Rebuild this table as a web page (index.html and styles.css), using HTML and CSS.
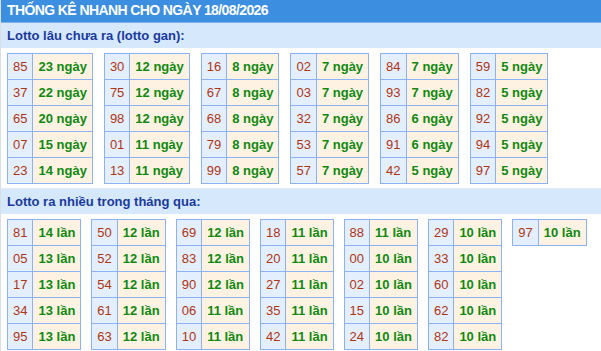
FILE: index.html
```html
<!DOCTYPE html>
<html lang="vi">
<head>
<meta charset="utf-8">
<title>Thống kê nhanh</title>
<link rel="stylesheet" href="styles.css">
</head>
<body>
<div class="box">
  <h2 class="title">THỐNG KÊ NHANH CHO NGÀY 18/08/2026</h2>
  <div class="section">
    <h3 class="sec-head">Lotto lâu chưa ra (lotto gan):</h3>
    <div class="tables">
      <table class="lt"><tr><td class="n">85</td><td class="v">23 ngày</td></tr><tr><td class="n">37</td><td class="v">22 ngày</td></tr><tr><td class="n">65</td><td class="v">20 ngày</td></tr><tr><td class="n">07</td><td class="v">15 ngày</td></tr><tr><td class="n">23</td><td class="v">14 ngày</td></tr></table>
      <table class="lt"><tr><td class="n">30</td><td class="v">12 ngày</td></tr><tr><td class="n">75</td><td class="v">12 ngày</td></tr><tr><td class="n">98</td><td class="v">12 ngày</td></tr><tr><td class="n">01</td><td class="v">11 ngày</td></tr><tr><td class="n">13</td><td class="v">11 ngày</td></tr></table>
      <table class="lt"><tr><td class="n">16</td><td class="v">8 ngày</td></tr><tr><td class="n">67</td><td class="v">8 ngày</td></tr><tr><td class="n">68</td><td class="v">8 ngày</td></tr><tr><td class="n">79</td><td class="v">8 ngày</td></tr><tr><td class="n">99</td><td class="v">8 ngày</td></tr></table>
      <table class="lt"><tr><td class="n">02</td><td class="v">7 ngày</td></tr><tr><td class="n">03</td><td class="v">7 ngày</td></tr><tr><td class="n">32</td><td class="v">7 ngày</td></tr><tr><td class="n">53</td><td class="v">7 ngày</td></tr><tr><td class="n">57</td><td class="v">7 ngày</td></tr></table>
      <table class="lt"><tr><td class="n">84</td><td class="v">7 ngày</td></tr><tr><td class="n">93</td><td class="v">7 ngày</td></tr><tr><td class="n">86</td><td class="v">6 ngày</td></tr><tr><td class="n">91</td><td class="v">6 ngày</td></tr><tr><td class="n">42</td><td class="v">5 ngày</td></tr></table>
      <table class="lt"><tr><td class="n">59</td><td class="v">5 ngày</td></tr><tr><td class="n">82</td><td class="v">5 ngày</td></tr><tr><td class="n">92</td><td class="v">5 ngày</td></tr><tr><td class="n">94</td><td class="v">5 ngày</td></tr><tr><td class="n">97</td><td class="v">5 ngày</td></tr></table>
    </div>
  </div>
  <div class="section">
    <h3 class="sec-head">Lotto ra nhiều trong tháng qua:</h3>
    <div class="tables">
      <table class="lt"><tr><td class="n">81</td><td class="v">14 lần</td></tr><tr><td class="n">05</td><td class="v">13 lần</td></tr><tr><td class="n">17</td><td class="v">13 lần</td></tr><tr><td class="n">34</td><td class="v">13 lần</td></tr><tr><td class="n">95</td><td class="v">13 lần</td></tr></table>
      <table class="lt"><tr><td class="n">50</td><td class="v">12 lần</td></tr><tr><td class="n">52</td><td class="v">12 lần</td></tr><tr><td class="n">54</td><td class="v">12 lần</td></tr><tr><td class="n">61</td><td class="v">12 lần</td></tr><tr><td class="n">63</td><td class="v">12 lần</td></tr></table>
      <table class="lt"><tr><td class="n">69</td><td class="v">12 lần</td></tr><tr><td class="n">83</td><td class="v">12 lần</td></tr><tr><td class="n">90</td><td class="v">12 lần</td></tr><tr><td class="n">06</td><td class="v">11 lần</td></tr><tr><td class="n">10</td><td class="v">11 lần</td></tr></table>
      <table class="lt"><tr><td class="n">18</td><td class="v">11 lần</td></tr><tr><td class="n">20</td><td class="v">11 lần</td></tr><tr><td class="n">27</td><td class="v">11 lần</td></tr><tr><td class="n">35</td><td class="v">11 lần</td></tr><tr><td class="n">42</td><td class="v">11 lần</td></tr></table>
      <table class="lt"><tr><td class="n">88</td><td class="v">11 lần</td></tr><tr><td class="n">00</td><td class="v">10 lần</td></tr><tr><td class="n">02</td><td class="v">10 lần</td></tr><tr><td class="n">15</td><td class="v">10 lần</td></tr><tr><td class="n">24</td><td class="v">10 lần</td></tr></table>
      <table class="lt"><tr><td class="n">29</td><td class="v">10 lần</td></tr><tr><td class="n">33</td><td class="v">10 lần</td></tr><tr><td class="n">60</td><td class="v">10 lần</td></tr><tr><td class="n">62</td><td class="v">10 lần</td></tr><tr><td class="n">82</td><td class="v">10 lần</td></tr></table>
      <table class="lt"><tr><td class="n">97</td><td class="v">10 lần</td></tr></table>
    </div>
  </div>
</div>
</body>
</html>
```

FILE: styles.css
```css
html, body {
  margin: 0;
  padding: 0;
  background: #ffffff;
}
body {
  font-family: "Liberation Sans", Arial, sans-serif;
}
.box {
  border-left: 1px solid #d9dee6;
}
.title {
  margin: 0;
  height: 22px;
  line-height: 21px;
  padding: 0 6px;
  background: #3c8ee1;
  color: #ffffff;
  font-size: 14px;
  letter-spacing: -0.6px;
  font-weight: bold;
  border-bottom: 1px solid #7fb3ea;
}
.section {
  border-bottom: 1px solid #e4e9f0;
}
.sec-head {
  margin: 0;
  height: 25px;
  line-height: 25px;
  padding: 0 6px;
  background: #d5e8fc;
  color: #1a3a9c;
  font-size: 13px;
  font-weight: bold;
}
.tables {
  display: flex;
  flex-wrap: wrap;
  align-items: flex-start;
  gap: 10px 11px;
  padding: 5px 6px 4px;
}
.section + .section .tables {
  gap: 10px 10px;
}
.lt {
  border-collapse: collapse;
  font-size: 13px;
}
.lt td {
  border: 1px solid #8db1f1;
  height: 25px;
  padding: 0 5px;
  white-space: nowrap;
  line-height: 25px;
}
.lt .n {
  background: #e4effe;
  color: #ad3515;
}
.lt .v {
  background: #fef3e2;
  color: #118811;
  font-weight: bold;
}
```
